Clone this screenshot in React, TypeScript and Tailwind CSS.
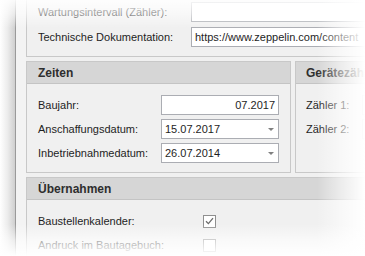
import React from 'react';

const Input: React.FC<{ value?: string; align?: 'left' | 'right'; dropdown?: boolean; className?: string }> = ({
  value = '',
  align = 'left',
  dropdown = false,
  className = '',
}) => (
  <div
    className={`relative flex h-[20px] shrink-0 items-center border border-[#abadb3] bg-white px-[3px] text-[11px] text-[#1e1e1e] ${
      align === 'right' ? 'justify-end' : 'justify-start'
    } ${className}`}
  >
    <span className="whitespace-nowrap">{value}</span>
    {dropdown && (
      <span className="absolute right-[4px] top-[8px] h-0 w-0 border-x-[3px] border-t-[3px] border-x-transparent border-t-[#808080]" />
    )}
  </div>
);

const Header: React.FC<{ title: string }> = ({ title }) => (
  <div className="flex h-[22px] items-center whitespace-nowrap border-b border-[#c4c4c4] bg-[#d6d6d6] pl-[11px] text-[12px] font-bold text-[#2e2e2e]">
    {title}
  </div>
);

const Check: React.FC<{ checked?: boolean }> = ({ checked }) => (
  <div className="flex h-[13px] w-[13px] shrink-0 items-center justify-center border border-[#8f8f8f] bg-white">
    {checked && (
      <svg width="9" height="8" viewBox="0 0 9 8">
        <path d="M1 4.2 L3.4 6.6 L8 1.2" fill="none" stroke="#6b6b6b" strokeWidth="1.3" />
      </svg>
    )}
  </div>
);

export default function App() {
  return (
    <div className="relative h-[256px] w-[365px] overflow-hidden bg-white font-['Liberation_Sans',Arial,sans-serif] text-[11px] text-[#1e1e1e]">
      <div className="flex h-full">
        <div className="w-[15px] shrink-0 bg-gradient-to-r from-white via-[#ececec] to-[#cfcfcf]" />
        <div className="w-[11px] shrink-0 border-l border-[#9a9a9a] bg-[#f3f3f3]" />
        <div className="flex min-w-0 flex-1 flex-col gap-[4px] bg-[#f0f0f0]">
          {/* oberer Bereich */}
          <div className="flex h-[57px] shrink-0 flex-col gap-[5px] border-b border-l border-[#c8c8c8] pl-[11px] pt-[2px]">
            <div className="flex h-[20px] items-center">
              <span className="w-[153px] shrink-0 whitespace-nowrap">Wartungsintervall (Zähler):</span>
              <Input className="w-[200px]" />
            </div>
            <div className="flex h-[20px] items-center">
              <span className="w-[153px] shrink-0 whitespace-nowrap">Technische Dokumentation:</span>
              <Input className="w-[200px]" value="https://www.zeppelin.com/content" />
            </div>
          </div>

          <div className="flex shrink-0 gap-[4px]">
            <div className="h-[112px] w-[265px] shrink-0 border border-[#c8c8c8]">
              <Header title="Zeiten" />
              <div className="flex flex-col gap-[4px] pl-[11px] pt-[11px]">
                <div className="flex h-[20px] items-center">
                  <span className="w-[123px] shrink-0">Baujahr:</span>
                  <Input className="w-[118px]" value="07.2017" align="right" />
                </div>
                <div className="flex h-[20px] items-center">
                  <span className="w-[123px] shrink-0">Anschaffungsdatum:</span>
                  <Input className="w-[118px]" value="15.07.2017" dropdown />
                </div>
                <div className="flex h-[20px] items-center">
                  <span className="w-[123px] shrink-0">Inbetriebnahmedatum:</span>
                  <Input className="w-[118px]" value="26.07.2014" dropdown />
                </div>
              </div>
            </div>
            <div className="h-[112px] min-w-0 flex-1 border-b border-l border-t border-[#c8c8c8]">
              <div className="flex h-[22px] items-center whitespace-nowrap border-b border-[#c4c4c4] bg-[#d6d6d6] pl-[10px] text-[12px] font-bold text-[#2e2e2e]">
                Gerätezähler
              </div>
              <div className="flex flex-col gap-[4px] pl-[10px] pt-[11px]">
                <div className="flex h-[20px] items-center whitespace-nowrap">
                  <span className="w-[56px] shrink-0">Zähler 1:</span>
                  <Input className="w-[60px]" />
                </div>
                <div className="flex h-[20px] items-center whitespace-nowrap">
                  <span className="w-[56px] shrink-0">Zähler 2:</span>
                  <Input className="w-[60px]" />
                </div>
              </div>
            </div>
          </div>

          <div className="flex-1 border-l border-t border-[#c8c8c8]">
            <Header title="Übernahmen" />
            <div className="flex flex-col gap-[4px] pl-[11px] pt-[11px]">
              <div className="flex h-[20px] items-center">
                <span className="w-[165px] shrink-0">Baustellenkalender:</span>
                <Check checked />
              </div>
              <div className="flex h-[20px] items-center">
                <span className="w-[165px] shrink-0">Andruck im Bautagebuch:</span>
                <Check />
              </div>
            </div>
          </div>
        </div>
      </div>

      {/* Ausblendungen */}
      <div className="pointer-events-none absolute left-0 top-0 h-[28px] w-full bg-gradient-to-b from-white/90 via-white/55 to-transparent" />
      <div className="pointer-events-none absolute right-0 top-0 h-full w-[48px] bg-gradient-to-r from-transparent via-white/55 to-white" />
      <div className="pointer-events-none absolute bottom-0 left-0 h-[32px] w-full bg-gradient-to-t from-white via-white/60 to-transparent" />
    </div>
  );
}
